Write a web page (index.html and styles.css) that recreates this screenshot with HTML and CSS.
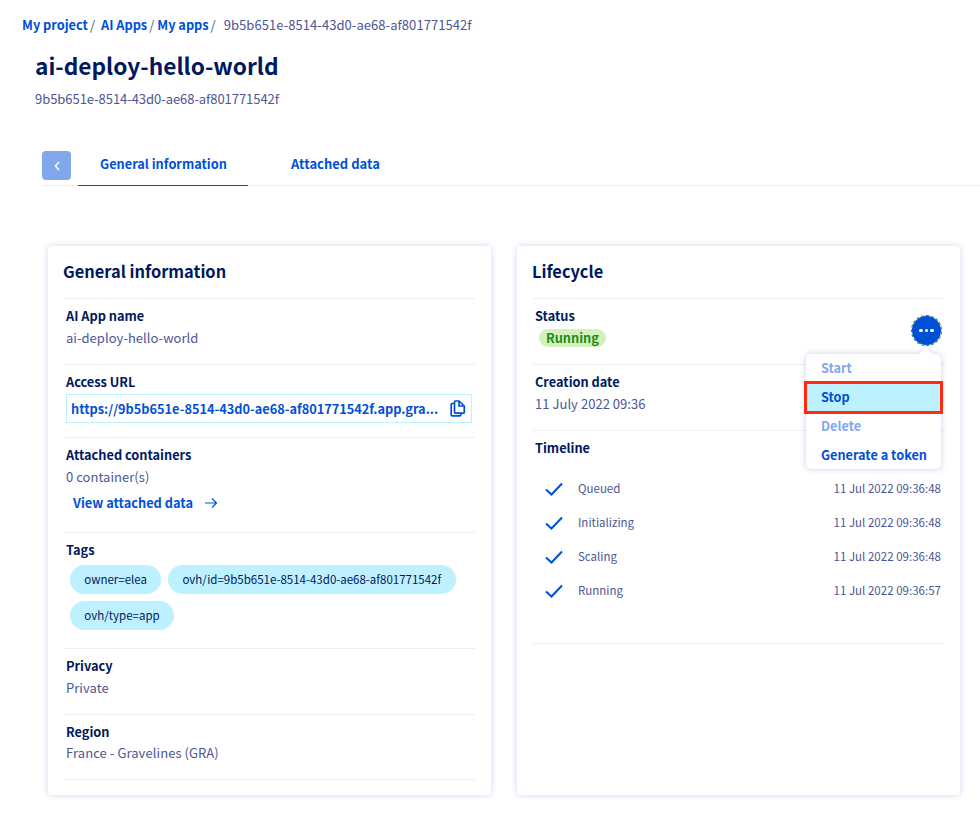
FILE: index.html
```html
<!DOCTYPE html>
<html lang="en">
<head>
<meta charset="utf-8">
<title>ai-deploy-hello-world</title>
<link rel="stylesheet" href="styles.css">
</head>
<body>
<nav class="breadcrumb">
  <a class="crumb">My project</a><span class="sep">/</span>
  <a class="crumb gap-left">AI Apps</a><span class="sep">/</span>
  <a class="crumb">My apps</a><span class="sep">/</span>
  <span class="crumb-current">9b5b651e-8514-43d0-ae68-af801771542f</span>
</nav>
<header class="page-head">
  <h1>ai-deploy-hello-world</h1>
  <p class="subtitle">9b5b651e-8514-43d0-ae68-af801771542f</p>
</header>
<div class="tabs">
  <button class="back" aria-label="Back">
    <svg width="8" height="12" viewBox="0 0 8 12"><path d="M6 2 2.500 6 6 10" fill="none" stroke="#fff" stroke-width="1.500"/></svg>
  </button>
  <a class="tab active">General information</a>
  <a class="tab">Attached data</a>
</div>
<main class="cards">
  <section class="card">
    <h2>General information</h2>
    <div class="row">
      <div class="label">AI App name</div>
      <div class="value">ai-deploy-hello-world</div>
    </div>
    <div class="row row-url">
      <div class="label">Access URL</div>
      <div class="url-box">
        <span class="url">https://9b5b651e-8514-43d0-ae68-af801771542f.app.gra...</span>
        <svg class="copy" width="16" height="17" viewBox="0 0 16 17"><path d="M4.500 3.500H2.200a1 1 0 0 0-1 1v10.300a1 1 0 0 0 1 1h7.600a1 1 0 0 0 1-1v-1.600M9 1H5.500a1 1 0 0 0-1 1v10.200a1 1 0 0 0 1 1h7.800a1 1 0 0 0 1-1V6L9 1Zm0 0v5h5.300" fill="none" stroke="#0050d7" stroke-width="1.700"/></svg>
      </div>
    </div>
    <div class="row row-containers">
      <div class="label">Attached containers</div>
      <div class="value">0 container(s)</div>
      <a class="link">View attached data
        <svg width="14" height="12" viewBox="0 0 14 12"><path d="M1 6h11.500M8 1.500 12.500 6 8 10.500" fill="none" stroke="#0050d7" stroke-width="1.200"/></svg>
      </a>
    </div>
    <div class="row row-tags">
      <div class="label">Tags</div>
      <div class="tags">
        <span class="tag">owner=elea</span>
        <span class="tag">ovh/id=9b5b651e-8514-43d0-ae68-af801771542f</span>
        <span class="tag">ovh/type=app</span>
      </div>
    </div>
    <div class="row">
      <div class="label">Privacy</div>
      <div class="value">Private</div>
    </div>
    <div class="row row-last">
      <div class="label">Region</div>
      <div class="value">France - Gravelines (GRA)</div>
    </div>
  </section>
  <section class="card lifecycle">
    <h2>Lifecycle</h2>
    <div class="row">
      <div class="label">Status</div>
      <span class="status">Running</span>
    </div>
    <div class="row">
      <div class="label">Creation date</div>
      <div class="value">11 July 2022 09:36</div>
    </div>
    <div class="row row-last row-timeline">
      <div class="label">Timeline</div>
      <ul class="timeline">
        <li><svg class="check" width="18" height="14" viewBox="0 0 18 14"><path d="M1 7.500 6.500 12.500 17 1.500" fill="none" stroke="#0050d7" stroke-width="2"/></svg><span class="step">Queued</span><span class="time">11 Jul 2022 09:36:48</span></li>
        <li><svg class="check" width="18" height="14" viewBox="0 0 18 14"><path d="M1 7.500 6.500 12.500 17 1.500" fill="none" stroke="#0050d7" stroke-width="2"/></svg><span class="step">Initializing</span><span class="time">11 Jul 2022 09:36:48</span></li>
        <li><svg class="check" width="18" height="14" viewBox="0 0 18 14"><path d="M1 7.500 6.500 12.500 17 1.500" fill="none" stroke="#0050d7" stroke-width="2"/></svg><span class="step">Scaling</span><span class="time">11 Jul 2022 09:36:48</span></li>
        <li><svg class="check" width="18" height="14" viewBox="0 0 18 14"><path d="M1 7.500 6.500 12.500 17 1.500" fill="none" stroke="#0050d7" stroke-width="2"/></svg><span class="step">Running</span><span class="time">11 Jul 2022 09:36:57</span></li>
      </ul>
    </div>
    <button class="more" aria-label="Actions"><i></i><i></i><i></i></button>
    <div class="menu">
      <a class="item disabled">Start</a>
      <a class="item selected">Stop</a>
      <a class="item disabled">Delete</a>
      <a class="item">Generate a token</a>
    </div>
  </section>
</main>
</body>
</html>
```

FILE: styles.css
```css
* { box-sizing: border-box; }
html, body { margin: 0; padding: 0; }
body {
  width: 980px;
  height: 817px;
  overflow: hidden;
  background: #fff;
  color: #4d5693;
  font-family: "Noto Sans CJK SC", "Source Sans Pro", "Noto Sans", sans-serif;
  font-size: 13px;
  line-height: 22px;
}
a { color: #0050d7; }

.breadcrumb {
  display: flex;
  padding: 14px 0 0 22px;
  height: 36px;
  font-size: 13px;
}
.crumb { font-weight: 600; font-size: 12.750px; }
.gap-left { margin-left: 3px; }
.sep { margin: 0 3px 0 2px; }
.crumb-current { margin-left: 5px; letter-spacing: 0.060px; }

.page-head { padding: 14px 0 0 35px; }
h1 {
  margin: 0;
  color: #00185e;
  font-size: 22.700px;
  line-height: 32px;
  font-weight: 700;
}
.subtitle { margin: 6px 0 0; line-height: 22px; letter-spacing: -0.050px; }

.tabs {
  display: flex;
  margin: 41px 0 0 42px;
  height: 35px;
  border-bottom: 1px solid #eaeff7;
}
.back {
  width: 29px;
  height: 29px;
  padding: 0;
  border: 0;
  border-radius: 4px;
  background: #80a7eb;
  display: flex;
  align-items: center;
  justify-content: center;
}
.tab {
  display: block;
  height: 35px;
  padding: 2px 22px 0;
  font-weight: 600;
  font-size: 13px;
  white-space: nowrap;
}
.tab.active {
  margin-left: 7px;
  width: 170px;
  font-size: 12.750px;
  border-bottom: 1px solid #0050d7;
}
.tab + .tab { margin-left: 21px; }

.cards {
  display: grid;
  grid-template-columns: 443px 443px;
  column-gap: 26px;
  margin: 60px 0 0 48px;
  height: 549px;
}
.card {
  position: relative;
  padding: 0 15px;
  border-radius: 4px;
  background: #fff;
  box-shadow: 0 0 6px rgba(40, 60, 190, 0.22);
}
h2 {
  margin: 0;
  height: 52px;
  padding-top: 12px;
  color: #00185e;
  font-size: 16.400px;
  line-height: 26px;
  font-weight: 700;
}
.row {
  height: 66px;
  padding: 6px 0 0 3px;
  border-top: 1px solid #eef0f6;
}
.row-last { border-bottom: 1px solid #eef0f6; }
.row-last .value { margin-top: -1px; letter-spacing: 0.080px; }
.label { color: #00185e; font-weight: 600; font-size: 12.750px; }
.value { letter-spacing: 0.040px; }
.row-url { height: 73px; }
.url-box {
  display: flex;
  align-items: center;
  width: 406px;
  height: 29px;
  margin-top: 1px;
  padding: 0 4px;
  border: 1px solid #bef1ff;
}
.url {
  flex: 1;
  min-width: 0;
  white-space: nowrap;
  color: #0050d7;
  font-weight: 600;
  font-size: 12.750px;
}
.copy { margin: 0 1px 0 0; flex: none; }

.row-containers { height: 95px; }
.link {
  display: flex;
  align-items: center;
  gap: 11px;
  margin: 4px 0 0 7px;
  font-weight: 600;
  font-size: 12.800px;
}

.row-tags { height: 116px; }
.tags {
  display: flex;
  flex-wrap: wrap;
  gap: 7px;
  padding: 4px 0 0 4px;
  width: 410px;
}
.tag {
  height: 29px;
  padding: 0 14.250px;
  border-radius: 15px;
  background: #bef1ff;
  color: #00185e;
  font-size: 11.500px;
  line-height: 28px;
}

.status {
  display: inline-block;
  margin: 2px 0 0 4px;
  height: 18px;
  padding: 0 7px;
  border-radius: 9px;
  background: #d3f1bb;
  color: #1f8a1a;
  font-weight: 600;
  font-size: 12.750px;
  line-height: 18px;
  vertical-align: top;
}

.row-timeline { height: 214px; }
.timeline {
  margin: 0;
  padding: 12px 0 0;
  list-style: none;
}
.timeline li {
  display: flex;
  align-items: center;
  height: 34px;
  padding: 0 4px 0 10px;
  font-size: 11.500px;
}
.check { flex: none; margin: 2px 15px 0 0; }
.step { flex: 1; }
.time { letter-spacing: 0.020px; }

.more {
  position: absolute;
  left: 394px;
  top: 69px;
  width: 31px;
  height: 31px;
  padding: 0;
  display: flex;
  align-items: center;
  justify-content: center;
  gap: 2px;
  border: 1px dashed #2f7f46;
  border-radius: 50%;
  background: #0050d7;
  background-clip: padding-box;
}
.more i {
  width: 3.500px;
  height: 3.500px;
  border-radius: 50%;
  background: #fff;
}
.menu {
  position: absolute;
  left: 289px;
  top: 108px;
  width: 135px;
  height: 115px;
  padding: 0;
  border-radius: 5px;
  background: #fff;
  box-shadow: 0 0 6px rgba(40, 60, 190, 0.25);
}
.menu::before {
  content: "";
  position: absolute;
  right: 10px;
  top: -5px;
  width: 10px;
  height: 10px;
  background: #fff;
  transform: rotate(45deg);
  box-shadow: -1px -1px 2px rgba(40, 60, 190, 0.1);
}
.item {
  position: relative;
  display: block;
  height: 29px;
  padding: 3px 0 0 15px;
  font-weight: 600;
  font-size: 12.700px;
  line-height: 22px;
}
.item.disabled { color: #80a7eb; }
.item.selected {
  background: #bef1ff;
  outline: 3px solid #ff2a10;
  outline-offset: -1px;
}
```
